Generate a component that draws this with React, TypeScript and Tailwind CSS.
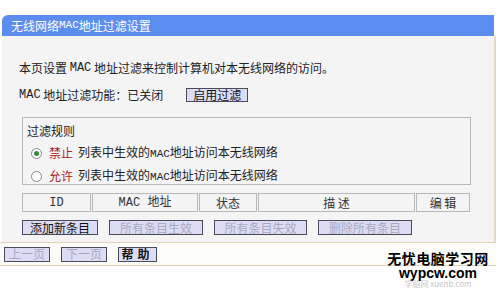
import React from 'react';

const cjk = "'Noto Sans CJK SC', 'Liberation Sans', sans-serif";
const mono = "'Liberation Mono', 'Noto Sans CJK SC', monospace";

const Btn: React.FC<{ label: string; w: string; disabled?: boolean; bold?: boolean }> = ({ label, w, disabled, bold }) => (
  <div
    className={`${w} h-[15px] flex items-center justify-center border border-[#4a4a5a] bg-[#dcdcf4] text-[12px] leading-none ${
      disabled ? 'text-[#a8a8c0]' : 'text-[#111]'
    } ${bold ? 'font-bold tracking-[4px]' : ''}`}
  >
    {label}
  </div>
);

const App: React.FC = () => {
  const cols = [
    { label: 'ID', w: 'w-[69px]', mono: true },
    { label: 'MAC 地址', w: 'w-[106px]', mono: true },
    { label: '状态', w: 'w-[58px]' },
    { label: '描 述', w: 'w-[157px]' },
    { label: '编 辑', w: 'w-[54px]' },
  ];

  return (
    <div className="w-[498px] h-[288px] bg-white relative overflow-hidden text-[#222]" style={{ fontFamily: cjk }}>
      <div className="pt-[15px] pl-[2px] w-[496px]">
        <div className="h-[21px] w-[492px] bg-[#5b8def] rounded-tl-[6px] text-white text-[12px] pl-[9px] flex items-center">
          无线网络<span style={{ fontFamily: mono }} className="text-[11px]">MAC</span>地址过滤设置
        </div>
        <div className="h-[206px] bg-[#f4f4f5] border-r-2 border-[#e3d9c4] flex flex-col">
          <div className="mt-[26px] pl-[17px] text-[12px] leading-[12px] flex items-center">
            本页设置&nbsp;<span style={{ fontFamily: mono }}>MAC</span>&nbsp;地址过滤来控制计算机对本无线网络的访问。
          </div>
          <div className="mt-[14px] pl-[17px] flex items-center text-[12px] leading-none">
            <span style={{ fontFamily: mono }}>MAC</span>
            <span>&nbsp;地址过滤功能：已关闭</span>
            <div className="ml-[23px] w-[62px] h-[14px] border border-[#4a4a5a] bg-[#dcdcf4] flex items-center justify-center text-[12px] text-[#111]">
              启用过滤
            </div>
          </div>
          <div className="mt-[15px] ml-[20px] w-[449px] h-[68px] border border-[#b8b8b8] flex flex-col text-[12px] leading-none">
            <div className="mt-[7px] ml-[4px]">过滤规则</div>
            <div className="mt-[9px] ml-[8px] flex items-center">
              <div className="w-[11px] h-[11px] rounded-full border border-[#7c8a8c] bg-white flex items-center justify-center">
                <div className="w-[5px] h-[5px] rounded-full bg-[#3a8a3a]" />
              </div>
              <span className="ml-[7px] text-[#b02020]">禁止</span>
              <span className="ml-[5px]">列表中生效的<span style={{ fontFamily: mono }} className="text-[11px]">MAC</span>地址访问本无线网络</span>
            </div>
            <div className="mt-[9px] ml-[8px] flex items-center">
              <div className="w-[11px] h-[11px] rounded-full border border-[#7c8a8c] bg-white" />
              <span className="ml-[7px] text-[#b02020]">允许</span>
              <span className="ml-[5px]">列表中生效的<span style={{ fontFamily: mono }} className="text-[11px]">MAC</span>地址访问本无线网络</span>
            </div>
          </div>
          <div className="mt-[8px] ml-[20px] flex gap-[1px]">
            {cols.map((c) => (
              <div
                key={c.label}
                className={`${c.w} h-[19px] border border-[#b8b8b8] flex items-center justify-center text-[12px] leading-none text-[#333]`}
                style={c.mono ? { fontFamily: mono } : undefined}
              >
                {c.label}
              </div>
            ))}
          </div>
          <div className="mt-[8px] ml-[20px] flex gap-[11px]">
            <Btn label="添加新条目" w="w-[76px]" />
            <Btn label="所有条目生效" w="w-[94px]" disabled />
            <Btn label="所有条目失效" w="w-[93px]" disabled />
            <Btn label="删除所有条目" w="w-[94px]" disabled />
          </div>
        </div>
      </div>
      <div className="h-[24px] w-[496px] border-t border-b border-[#e0d2b4] bg-[#fbfbf8] flex items-center pl-[4px] gap-[11px]">
        <Btn label="上一页" w="w-[46px]" disabled />
        <Btn label="下一页" w="w-[46px]" disabled />
        <Btn label="帮助" w="w-[39px]" bold />
      </div>
      <div className="absolute left-[386px] top-[250px] w-[104px] flex flex-col items-center whitespace-nowrap">
        <div className="text-[14px] font-bold leading-[16px] text-black tracking-[0.5px]">无忧电脑学习网</div>
        <div className="text-[14px] font-bold leading-[14px] text-black" style={{ fontFamily: "'Liberation Sans', sans-serif" }}>
          wypcw.com
        </div>
        <div className="text-[8px] leading-[8px] text-[#c8c8c8]">学脑网 xuenb.com</div>
      </div>
    </div>
  );
};

export default App;
